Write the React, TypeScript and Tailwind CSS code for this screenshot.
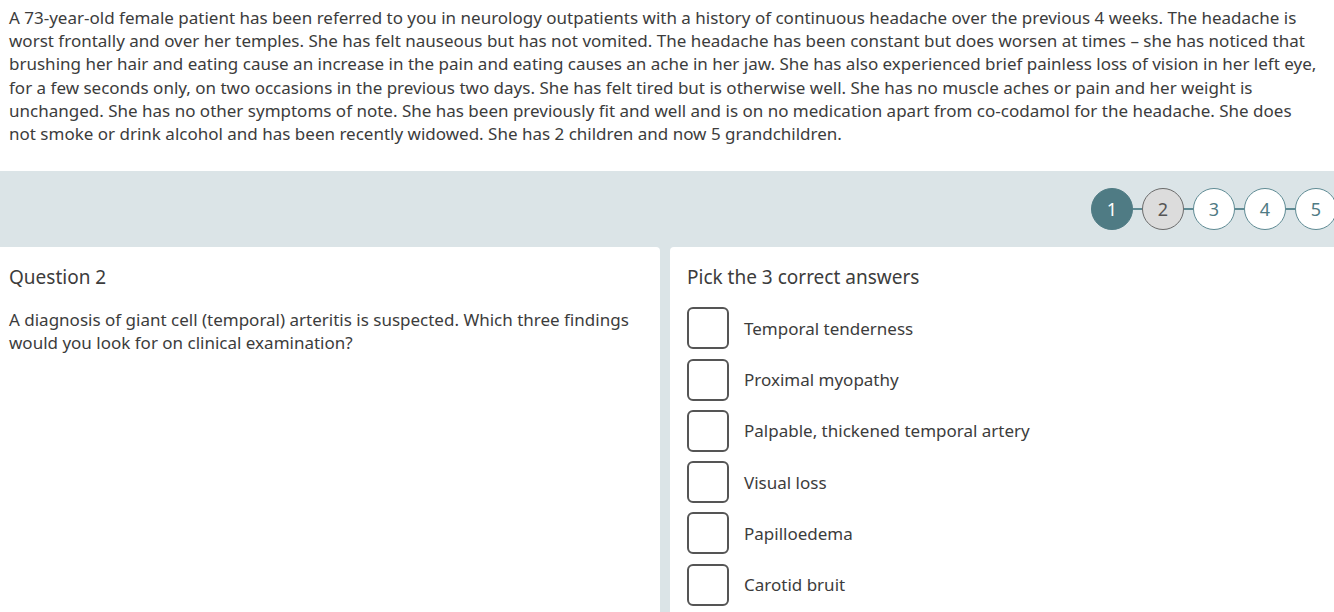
const answers = [
  'Temporal tenderness',
  'Proximal myopathy',
  'Palpable, thickened temporal artery',
  'Visual loss',
  'Papilloedema',
  'Carotid bruit',
]

function Step({ n, state }: { n: number; state: 'done' | 'current' | 'todo' }) {
  const cls =
    state === 'done'
      ? 'bg-[#4f7b84] border-[#4f7b84] text-white'
      : state === 'current'
        ? 'bg-[#dcdcdc] border-[#6b6b6b] text-[#555]'
        : 'bg-white border-[#5f8b94] text-[#4f7b84]'
  return (
    <div className={`flex h-[42px] w-[42px] shrink-0 items-center justify-center rounded-full border-[1.5px] text-[18px] ${cls}`}>
      {n}
    </div>
  )
}

export default function App() {
  const steps: ('done' | 'current' | 'todo')[] = ['done', 'current', 'todo', 'todo', 'todo']
  return (
    <div className="min-h-screen bg-white text-[#3c3c3c]" style={{ fontFamily: '"Noto Sans", "Open Sans", sans-serif' }}>
      <p className="pl-[9px] pr-[15px] pt-[6px] text-[17px] leading-[23.2px]">
        A 73-year-old female patient has been referred to you in neurology outpatients with a history of continuous headache over the previous 4 weeks. The headache is worst frontally and over her temples. She has felt nauseous but has not vomited. The headache has been constant but does worsen at times – she has noticed that brushing her hair and eating cause an increase in the pain and eating causes an ache in her jaw. She has also experienced brief painless loss of vision in her left eye, for a few seconds only, on two occasions in the previous two days. She has felt tired but is otherwise well. She has no muscle aches or pain and her weight is unchanged. She has no other symptoms of note. She has been previously fit and well and is on no medication apart from co-codamol for the headache. She does not smoke or drink alcohol and has been recently widowed. She has 2 children and now 5 grandchildren.
      </p>

      <div className="mt-[26px] flex h-[76px] items-center justify-end overflow-hidden bg-[#dbe4e7]">
        <div className="mr-[-3px] flex items-center">
          {steps.map((s, i) => (
            <div key={i} className="flex items-center">
              {i > 0 && <div className="h-[1.5px] w-[9px] bg-[#5f8b94]" />}
              <Step n={i + 1} state={s} />
            </div>
          ))}
        </div>
      </div>

      <div className="flex gap-[10px] bg-[#dbe4e7]">
        <div className="w-[660px] shrink-0 rounded-tr-[4px] bg-white pl-[9px] pr-[9px] pt-[17px] pb-10">
          <div className="text-[19px] leading-[26px]">Question 2</div>
          <p className="mt-[18px] text-[17px] leading-[23.2px]">
            A diagnosis of giant cell (temporal) arteritis is suspected. Which three findings would you look for on clinical examination?
          </p>
        </div>
        <div className="flex-1 rounded-tl-[4px] bg-white px-[17px] pt-[17px] pb-10">
          <div className="text-[19px] leading-[26px]">Pick the 3 correct answers</div>
          <div className="mt-[17px] flex flex-col gap-[9.3px]">
            {answers.map(a => (
              <label key={a} className="flex items-center gap-[15px]">
                <span className="h-[42px] w-[42px] shrink-0 rounded-[6px] border-2 border-[#555] bg-white" />
                <span className="text-[17px] leading-[23px]">{a}</span>
              </label>
            ))}
          </div>
        </div>
      </div>
    </div>
  )
}
